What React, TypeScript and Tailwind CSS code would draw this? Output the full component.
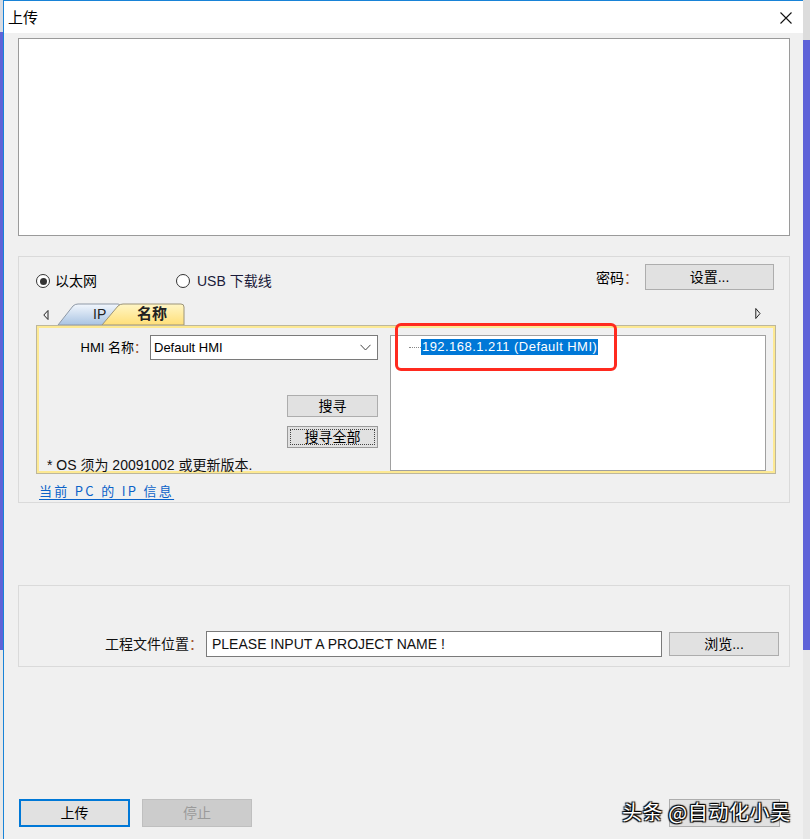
import React from "react";

function Radio({ checked }: { checked: boolean }) {
  return (
    <span className="w-[14px] h-[14px] rounded-full border border-[#333] bg-white flex items-center justify-center">
      {checked && <span className="w-[7px] h-[7px] rounded-full bg-[#333]" />}
    </span>
  );
}

function Btn({ children, className = "" }: { children?: React.ReactNode; className?: string }) {
  return (
    <div className={"flex items-center justify-center bg-[#e1e1e1] border border-[#adadad] text-[14px] text-black " + className}>
      {children}
    </div>
  );
}

export default function App() {
  return (
    <div className="relative w-[810px] h-[839px] flex overflow-hidden bg-[#e6e6e6] text-black font-['Liberation_Sans','Noto_Sans_CJK_SC',sans-serif]">
      {/* left desktop strip */}
      <div className="w-[3px] flex flex-col">
        <div className="h-[32px] bg-[#d8dbe2]" />
        <div className="h-[618px] bg-[#5f63d8]" />
        <div className="flex-1 bg-[#e8e8e8]" />
      </div>

      {/* window */}
      <div className="w-[800px] h-full flex flex-col border-l border-t border-[#1883d7] bg-[#f0f0f0]">
        {/* title bar */}
        <div className="h-[32px] bg-white flex items-center justify-between pl-[4px] pr-[11px] shrink-0">
          <span className="text-[15px] leading-none">上传</span>
          <svg width="12" height="12" viewBox="0 0 12 12" className="mt-[1px]">
            <path d="M0.5 0.5 L11.5 11.5 M11.5 0.5 L0.5 11.5" stroke="#111" strokeWidth="1.1" />
          </svg>
        </div>

        {/* body */}
        <div className="flex flex-col pl-[14px] pr-[13px] flex-1">
          {/* text area */}
          <div className="mt-[5px] h-[198px] bg-white border border-[#9a9a9a]" />

          {/* connection group */}
          <div className="mt-[20px] h-[247px] border border-[#dadada] flex flex-col">
            {/* radio row */}
            <div className="h-[26px] mt-[7px] flex items-start pl-[17px] pr-[15px]">
              <div className="flex items-center gap-[5px] mt-[8px] h-[18px]">
                <Radio checked />
                <span className="text-[14px] leading-none">以太网</span>
              </div>
              <div className="flex items-center gap-[7px] mt-[8px] h-[18px] ml-[79px]">
                <Radio checked={false} />
                <span className="text-[14px] leading-none text-[#1a1a3a]">USB 下载线</span>
              </div>
              <div className="flex-1" />
              <span className="text-[14px] mt-[5px] leading-[18px]">
                密码<span className="text-[#a0522d]">：</span>
              </span>
              <Btn className="ml-[7px] w-[129px] h-[26px]">设置...</Btn>
            </div>

            {/* separator */}
            <div className="mt-[8px] ml-[17px] mr-[15px] h-[1px] bg-[#a6a6a6]" />

            {/* tab strip */}
            <div className="h-[27px] ml-[17px] mr-[13px] flex items-start">
              <svg width="6" height="10" viewBox="0 0 6 10" className="ml-[7px] mt-[12px]">
                <path d="M5 0.5 L0.8 5 L5 9.5 Z" fill="none" stroke="#222" strokeWidth="1" />
              </svg>
              <div className="relative w-[130px] h-[22px] ml-[7px] mt-[5px]">
                <svg width="130" height="22" viewBox="0 0 130 22" className="absolute left-0 top-0">
                  <defs>
                    <linearGradient id="gb" x1="0" y1="0" x2="0" y2="1">
                      <stop offset="0" stopColor="#f2f7fd" />
                      <stop offset="1" stopColor="#a9c3e2" />
                    </linearGradient>
                    <linearGradient id="gy" x1="0" y1="0" x2="0" y2="1">
                      <stop offset="0" stopColor="#fff6c6" />
                      <stop offset="1" stopColor="#ffdf78" />
                    </linearGradient>
                  </defs>
                  <path d="M2 22 L17 3 Q19 1 22 1 L62 1 Q64 1 64 3 L64 22 Z" fill="url(#gb)" stroke="#8e98a6" strokeWidth="1" />
                  <path d="M46 22 L62 3 Q64 1 67 1 L125 1 Q128 1 128 4 L128 22 Z" fill="url(#gy)" stroke="#9c9478" strokeWidth="1" />
                </svg>
                <span className="absolute left-[37px] top-[3px] text-[14px] leading-[16px] text-[#222]">IP</span>
                <span className="absolute left-[81px] top-[2px] text-[15px] leading-[17px] font-bold text-[#222]">名称</span>
              </div>
              <div className="flex-1" />
              <svg width="6" height="11" viewBox="0 0 6 11" className="mr-[15px] mt-[10px]">
                <path d="M0.8 0.5 L5 5.5 L0.8 10.5 Z" fill="none" stroke="#222" strokeWidth="1" />
              </svg>
            </div>

            {/* tab panel */}
            <div className="h-[149px] ml-[17px] mr-[13px] border border-[#bdb79c]">
              <div className="h-full border-2 border-[#fde993] flex">
                {/* left column */}
                <div className="w-[351px] flex flex-col pt-[7px]">
                  <div className="flex items-center h-[25px]">
                    <span className="w-[108px] text-right text-[13px] leading-none">
                      HMI 名称<span className="text-[#a0522d]">：</span>
                    </span>
                    <div className="ml-[3px] w-[228px] h-[25px] bg-white border border-[#7a7a7a] flex items-center justify-between pl-[3px] pr-[6px]">
                      <span className="text-[13px] leading-none">Default HMI</span>
                      <svg width="11" height="7" viewBox="0 0 11 7">
                        <path d="M0.5 0.8 L5.5 6 L10.5 0.8" fill="none" stroke="#444" strokeWidth="1" />
                      </svg>
                    </div>
                  </div>
                  <Btn className="self-end mr-[12px] mt-[35px] w-[91px] h-[22px]">搜寻</Btn>
                  <div className="self-end mr-[12px] mt-[9px] w-[91px] h-[22px] bg-[#e1e1e1] border border-[#9a9a9a] p-[2px]">
                    <div className="w-full h-full border border-dotted border-[#444] flex items-center justify-center text-[14px] leading-none">
                      搜寻全部
                    </div>
                  </div>
                  <div className="ml-[8px] mt-[9px] text-[14px] leading-[16px] text-[#111]">
                    * OS 须为 20091002 或更新版本.
                  </div>
                </div>

                {/* list box */}
                <div className="relative flex-1 mt-[7px] mr-[7px] bg-white border border-[#a0a0a0]">
                  <div className="flex items-center mt-[3px] ml-[18px] h-[16px]">
                    <div className="w-[12px] border-t border-dotted border-[#888]" />
                    <span className="bg-[#0078d7] text-white text-[13px] leading-[16px] px-[1px] tracking-[0.45px]">
                      192.168.1.211 (Default HMI)
                    </span>
                  </div>
                  <div className="absolute left-[4px] top-[-13px] w-[222px] h-[48px] border-[3px] border-[#ff2a1f] rounded-[6px]" />
                </div>
              </div>
            </div>

            {/* link */}
            <div className="ml-[20px] mt-[5px]">
              <span className="text-[13px] leading-[16px] text-[#0b62c8] underline underline-offset-[3px] tracking-[2.3px] font-['Noto_Sans_CJK_SC','Liberation_Mono',monospace]">
                当前 PC 的 IP 信息
              </span>
            </div>
          </div>

          {/* project group */}
          <div className="mt-[82px] h-[82px] border border-[#dadada] flex flex-col">
            <div className="mt-[45px] flex items-center pr-[10px]">
              <span className="ml-[86px] text-[14px] leading-none text-[#111]">
                工程文件位置<span className="text-[#a0522d]">：</span>
              </span>
              <div className="ml-[3px] w-[456px] h-[26px] bg-white border border-[#7a7a7a] flex items-center pl-[5px]">
                <span className="text-[14px] leading-none text-[#111]">PLEASE INPUT A PROJECT NAME !</span>
              </div>
              <Btn className="ml-[7px] w-[110px] h-[24px]">浏览...</Btn>
            </div>
          </div>

          {/* bottom buttons */}
          <div className="mt-[132px] flex items-center">
            <div className="ml-[1px] w-[111px] h-[28px] bg-[#e1e1e1] border-2 border-[#0078d7] flex items-center justify-center text-[14px]">
              上传
            </div>
            <div className="ml-[12px] w-[110px] h-[28px] bg-[#cccccc] border border-[#bfbfbf] flex items-center justify-center text-[14px] text-[#9a9a9a]">
              停止
            </div>
            <div className="flex-1" />
            <div className="mr-[10px] w-[111px] h-[28px] bg-[#e1e1e1] border border-[#adadad]" />
          </div>
        </div>
      </div>

      {/* right desktop strip */}
      <div className="flex-1 flex flex-col">
        <div className="h-[40px] bg-[#dcdcdc]" />
        <div className="h-[610px] bg-[#5f63d8]" />
        <div className="flex-1 bg-[#e8e8e8]" />
      </div>

      {/* watermark */}
      <div className="absolute left-[622px] top-[798px] text-[20px] leading-[28px] tracking-[0.6px] text-white font-['Noto_Sans_CJK_SC',sans-serif] [text-shadow:0_0_1px_#000,1px_1px_1px_#000,-1px_-1px_1px_#000,1px_-1px_1px_#000,-1px_1px_1px_#000]">
        头条 @自动化小吴
      </div>
    </div>
  );
}
